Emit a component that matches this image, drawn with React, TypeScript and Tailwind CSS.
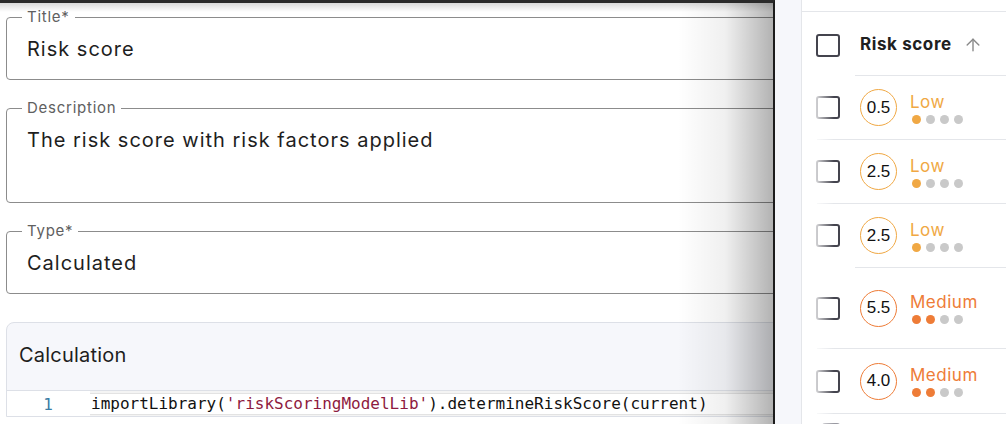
import { ArrowUp } from "lucide-react";

type Row = { score: string; level: "Low" | "Medium"; filled: number; height: string; line: string };

const rows: Row[] = [
  { score: "0.5", level: "Low", filled: 1, height: "h-[63px]", line: "ml-[15px]" },
  { score: "2.5", level: "Low", filled: 1, height: "h-[63px]", line: "ml-[15px]" },
  { score: "2.5", level: "Low", filled: 1, height: "h-[63px]", line: "ml-[53px]" },
  { score: "5.5", level: "Medium", filled: 2, height: "h-[80px]", line: "ml-[15px]" },
  { score: "4.0", level: "Medium", filled: 2, height: "h-[64px]", line: "ml-[15px]" },
];

const levelStyle = {
  Low: { text: "text-[#f0a844]", border: "border-[#f0a844]", dot: "bg-[#f0a844]" },
  Medium: { text: "text-[#ee7c37]", border: "border-[#ee7c37]", dot: "bg-[#ee7c37]" },
};

function OutlinedField({ label, value, tall }: { label: string; value: string; tall?: boolean }) {
  return (
    <fieldset className="w-[820px] rounded-[4px] border border-[#8c8c8c] px-[20px]">
      <legend className="ml-[-5px] px-[5px] text-[15px] leading-[18px] tracking-[0.05em] text-[#606060]">
        {label}
      </legend>
      <div className={tall ? "h-[85px] pt-[11px]" : "pt-[11px] pb-[18px]"}>
        <div className="text-[20px] leading-[24px] tracking-[0.05em] text-[#1e1e1e]">{value}</div>
      </div>
    </fieldset>
  );
}

function Checkbox() {
  return <div className="h-[23px] w-[24px] shrink-0 rounded-[3px] border-2 border-[#44444e] bg-white" />;
}

export default function App() {
  return (
    <div className="flex h-[424px] w-[1006px] overflow-hidden bg-[#f6f7fb] font-['Inter',sans-serif]">
      {/* editor panel */}
      <div className="relative w-[775px] shrink-0 overflow-hidden border-t-[3px] border-r-2 border-t-[#2a2a2a] border-r-[#1c1c1c] bg-white">
        <div className="flex flex-col gap-[19px] pt-[5px] pl-[6px]">
          <OutlinedField label="Title*" value="Risk score" />
          <OutlinedField label="Description" value="The risk score with risk factors applied" tall />
          <OutlinedField label="Type*" value="Calculated" />
        </div>

        <div className="mt-[28px] ml-[6px] w-[820px] rounded-tl-[8px] border border-[#dde0e7] bg-[#f6f7fb]">
          <div className="flex h-[68px] items-center border-b border-[#dde0e7] pb-[3px] pl-[12px] text-[20px] tracking-[0.01em] text-[#1e1e1e]">
            Calculation
          </div>
          <div className="flex bg-[#f4f4f4]">
            <div className="w-[83px] shrink-0 bg-white pt-[2px] pr-[37px] text-right font-['DejaVu_Sans_Mono',monospace] text-[16px] leading-[23px] text-[#3a7ca5]">
              1
            </div>
            <div className="flex-1">
              <div className="mt-[2px] border-y border-[#e3e3e3] bg-white pl-[1px] font-['DejaVu_Sans_Mono',monospace] text-[16px] leading-[20px] whitespace-pre text-[#111]">
                importLibrary(<span className="text-[#8e1a40]">'riskScoringModelLib'</span>).determineRiskScore(current)
              </div>
            </div>
          </div>
        </div>

        {/* drawer shadows */}
        <div className="pointer-events-none absolute inset-x-0 top-0 h-[9px] bg-gradient-to-b from-black/15 to-transparent" />
        <div className="pointer-events-none absolute inset-y-0 right-0 w-[96px] bg-gradient-to-r from-transparent via-black/[0.06] to-black/30" />
      </div>

      {/* gap */}
      <div className="w-[26px] shrink-0" />

      {/* table */}
      <div className="relative flex-1 border-l border-[#e4e6ea] bg-white">
        <div className="h-[12px] border-b border-[#e4e6ea]" />
        <div className="flex h-[63px] items-center pt-[3px] pl-[14px]">
          <Checkbox />
          <span className="ml-[20px] text-[17px] font-bold tracking-[0.035em] text-[#202020]">Risk score</span>
          <ArrowUp className="ml-[11px] h-[20px] w-[20px] text-[#8a8a8a]" strokeWidth={1.7} />
        </div>
        <div className="ml-[53px] h-px bg-[#e4e6ea]" />

        {rows.map((r, i) => {
          const s = levelStyle[r.level];
          return (
            <div key={i}>
              <div className={`flex items-center pl-[14px] ${r.height}`}>
                <Checkbox />
                <div
                  className={`ml-[20px] flex h-[37px] w-[37px] shrink-0 items-center justify-center rounded-full border ${s.border} font-['Liberation_Sans',sans-serif] text-[17px] text-[#111]`}
                >
                  {r.score}
                </div>
                <div className="ml-[13px] flex flex-col">
                  <span className={`text-[17px] leading-[20px] tracking-[0.03em] ${s.text}`}>{r.level}</span>
                  <div className="mt-[3px] ml-[2px] flex gap-[5px]">
                    {[0, 1, 2, 3].map((d) => (
                      <span
                        key={d}
                        className={`h-[9px] w-[9px] rounded-full ${d < r.filled ? s.dot : "bg-[#c9c9c9]"}`}
                      />
                    ))}
                  </div>
                </div>
              </div>
              <div className={`h-px bg-[#e4e6ea] ${r.line}`} />
            </div>
          );
        })}
        <div className="flex pl-[20px] pt-[9px]">
          <div className="h-[14px] w-[18px] rounded-t-[3px] border-2 border-b-0 border-[#9a9aa2]" />
        </div>

        {/* sticky column fade */}
        <div className="pointer-events-none absolute top-[76px] bottom-0 left-0 w-[32px] bg-gradient-to-r from-white via-white/70 to-transparent" />
      </div>
    </div>
  );
}
